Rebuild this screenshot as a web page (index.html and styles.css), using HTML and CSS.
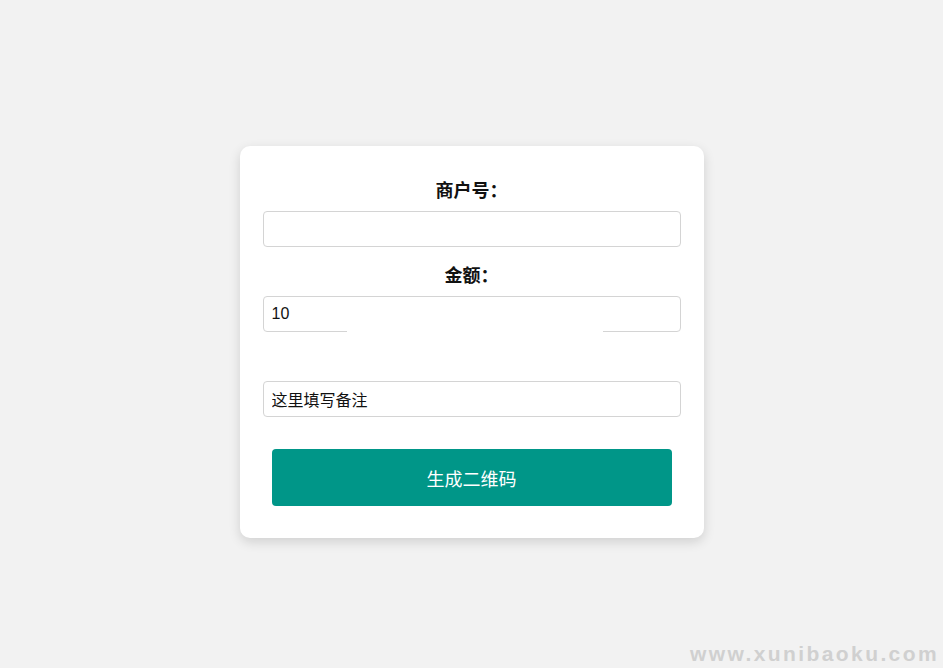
FILE: index.html
```html
<!DOCTYPE html>
<html lang="zh-CN">
<head>
  <meta charset="UTF-8">
  <meta name="viewport" content="width=device-width, initial-scale=1.0">
  <title>生成二维码</title>
  <link rel="stylesheet" href="styles.css">
</head>
<body>

  <!-- Form Card -->
  <div class="card">
    <div class="form-group">
      <label for="mch-id">商户号：</label>
      <input type="text" id="mch-id">
    </div>
    <div class="form-group">
      <label for="amount">金额：</label>
      <input type="text" id="amount" value="10">
    </div>
    <div class="form-group masked">
      <label for="remark">备注：</label>
      <input type="text" id="remark" value="这里填写备注">
    </div>
    <button class="submit-btn">生成二维码</button>
  </div>

  <div class="watermark">www.xunibaoku.com</div>

</body>
</html>
```

FILE: styles.css
```css
body {
  margin: 0;
  min-height: 668px;
  background-color: #f2f2f2;
  font-family: "Liberation Sans", Arial, "Noto Sans CJK SC", sans-serif;
  padding-top: 146px;
  box-sizing: border-box;
}

.card {
  width: 464px;
  box-sizing: border-box;
  margin: 0 auto;
  background-color: #ffffff;
  border-radius: 10px;
  padding: 33px 23px 32px;
  box-shadow: 0 4px 12px rgba(0, 0, 0, 0.14);
}

.form-group {
  position: relative;
  margin-bottom: 17px;
}

.form-group label {
  display: block;
  text-align: center;
  font-size: 18px;
  line-height: 24px;
  font-weight: bold;
  color: #111;
  margin-bottom: 8px;
}

.form-group input {
  display: block;
  width: 100%;
  height: 36px;
  box-sizing: border-box;
  padding: 0 8px;
  border: 1px solid #d4d4d4;
  border-radius: 4px;
  font-family: "Liberation Sans", Arial, "Noto Sans CJK SC", sans-serif;
  font-size: 16px;
  color: #111;
  background: #fff;
}

.form-group.masked label {
  color: #fff;
}

.form-group.masked::before {
  content: "";
  position: absolute;
  left: 84px;
  top: -19px;
  width: 256px;
  height: 37px;
  background: #fff;
}

.submit-btn {
  display: block;
  width: 400px;
  height: 57px;
  margin: 32px auto 0;
  border: none;
  border-radius: 4px;
  background-color: #009688;
  color: #fff;
  font-family: "Liberation Sans", Arial, "Noto Sans CJK SC", sans-serif;
  font-size: 18px;
  cursor: pointer;
}

.watermark {
  position: absolute;
  right: 4px;
  top: 642px;
  font-family: "Liberation Sans", Arial, sans-serif;
  font-weight: bold;
  font-size: 21px;
  letter-spacing: 2.4px;
  color: #d0d0d0;
}
```
